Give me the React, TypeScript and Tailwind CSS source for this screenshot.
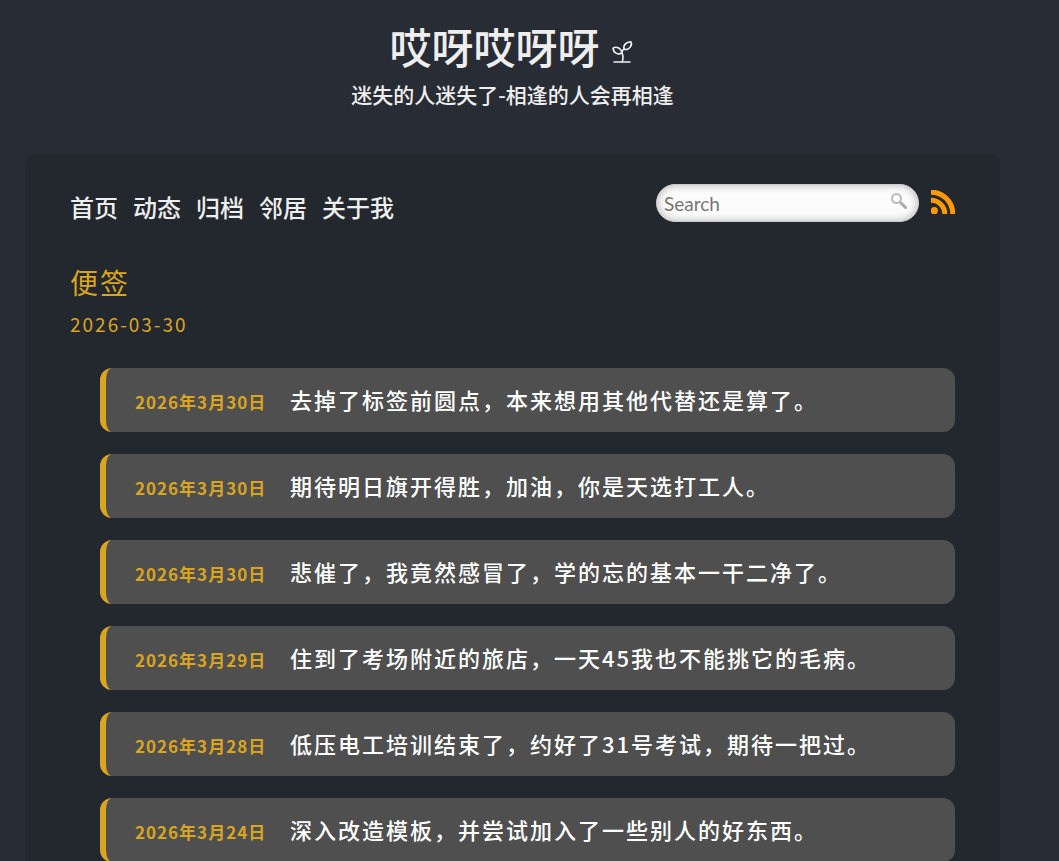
import React from "react";

const links = ["首页", "动态", "归档", "邻居", "关于我"];

const notes = [
  { date: "2026年3月30日", text: "去掉了标签前圆点，本来想用其他代替还是算了。" },
  { date: "2026年3月30日", text: "期待明日旗开得胜，加油，你是天选打工人。" },
  { date: "2026年3月30日", text: "悲催了，我竟然感冒了，学的忘的基本一干二净了。" },
  { date: "2026年3月29日", text: "住到了考场附近的旅店，一天45我也不能挑它的毛病。" },
  { date: "2026年3月28日", text: "低压电工培训结束了，约好了31号考试，期待一把过。" },
  { date: "2026年3月24日", text: "深入改造模板，并尝试加入了一些别人的好东西。" },
];

function Sprout() {
  return (
    <svg
      className="h-6 w-6"
      viewBox="0 0 24 24"
      fill="none"
      stroke="currentColor"
      strokeWidth="1.6"
      strokeLinecap="round"
      aria-hidden="true"
    >
      <path d="M2 23h16" />
      <path d="M10.200 23c1.300-3.500 1-6.500-.3-9.500C10 11.500 11 10.500 12.600 10" />
      <path d="M9.900 14C6.500 16 1.800 14.500 1 9.500 1.500 7.500 9 7.500 9.900 14Z" />
      <path d="M12.200 10.300c-1.400-4 1.800-7.300 6.500-7.600 2.200 3-1.200 9-6.500 7.600Z" />
    </svg>
  );
}

function Magnifier() {
  return (
    <svg className="h-4 w-4" viewBox="0 0 16 16" fill="none" aria-hidden="true">
      <circle cx="5.500" cy="5.500" r="4.500" stroke="#b9b9b9" strokeWidth="2" />
      <path d="M9 9l1.500 1.500" stroke="#b0b0b0" strokeWidth="2" />
      <path d="M10.500 10.500l4 4" stroke="#a9a9a9" strokeWidth="3" strokeLinecap="round" />
    </svg>
  );
}

function RssIcon() {
  return (
    <svg className="h-6 w-6" viewBox="0 0 24 24" fill="none" aria-hidden="true">
      <circle cx="3.300" cy="20.700" r="3.600" fill="#ff9900" />
      <path d="M0 10.200A13.800 13.800 0 0 1 13.800 24" stroke="#ff9900" strokeWidth="5" />
      <path d="M0 2.200A21.800 21.800 0 0 1 21.800 24" stroke="#ff9900" strokeWidth="5" />
    </svg>
  );
}

export default function App() {
  return (
    <div className="h-screen overflow-hidden bg-[#282c34] pr-[59px] pl-[25px] font-['Noto_Sans_CJK_SC',sans-serif] font-medium text-[#eeeeee]">
      <header className="flex h-[154px] flex-col items-center pt-[18px]">
        <h1 className="flex items-center gap-3 text-[42px] leading-[56px] font-medium">
          哎呀哎呀呀
          <span className="pt-2.5">
            <Sprout />
          </span>
        </h1>
        <p className="pt-1 text-[21px] leading-8">迷失的人迷失了-相逢的人会再相逢</p>
      </header>

      <main className="min-h-screen rounded-xl bg-[#23272e] px-[45px] pt-[30px]">
        <div className="flex items-start justify-between">
          <nav className="flex gap-[15px] pt-1 text-2xl leading-[38px]">
            {links.map((link) => (
              <a key={link} href="#">
                {link}
              </a>
            ))}
          </nav>
          <div className="flex items-center gap-3">
            <form className="relative">
              <input
                type="text"
                placeholder="Search"
                aria-label="Search"
                className="h-[38px] w-[263px] rounded-full border border-[#cccccc] bg-[#fcfcfc] pr-10 pl-[7px] font-['Lato','Noto_Sans_CJK_SC',sans-serif] text-[19px] font-normal text-[#222222] shadow-[inset_0_0_8px_rgba(0,0,0,0.3)] outline-none placeholder:text-[#757575]"
              />
              <button type="submit" aria-label="Go" className="absolute top-[9px] right-3">
                <Magnifier />
              </button>
            </form>
            <a href="#" aria-label="RSS" className="pb-0.5">
              <RssIcon />
            </a>
          </div>
        </div>

        <div className="pt-8 text-[#daa520]">
          <h2 className="text-[28px] leading-[48px] font-normal tracking-[2px]">便签</h2>
          <p className="text-[19px] leading-9 font-normal tracking-[2px]">2026-03-30</p>
        </div>

        <ul className="flex flex-col gap-[22px] pt-[26px] pl-[30px]">
          {notes.map((note) => (
            <li
              key={note.text}
              className="flex h-16 items-baseline gap-[26px] rounded-xl border-l-[6px] border-[#daa520] bg-[#4f4f4f] pt-3 pl-[29px] text-[22px] leading-[38px] tracking-[2px] text-white"
            >
              <time className="w-[129px] shrink-0 text-[17px] font-bold tracking-[1px] whitespace-nowrap text-[#daa520]">
                {note.date}
              </time>
              <span>{note.text}</span>
            </li>
          ))}
        </ul>
      </main>
    </div>
  );
}
